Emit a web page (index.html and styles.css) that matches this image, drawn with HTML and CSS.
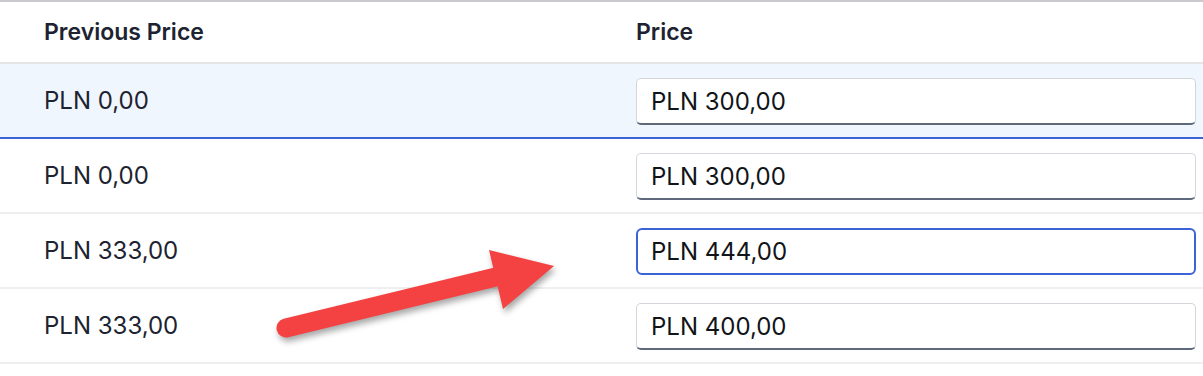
FILE: index.html
```html
<!DOCTYPE html>
<html lang="en">
<head>
    <meta charset="UTF-8">
    <title>Variant prices</title>
    <link rel="stylesheet" href="styles.css">
</head>
<body>

    <div class="prices">
        <table class="prices__table">
            <thead>
                <tr class="prices__head">
                    <th class="prices__cell prices__cell--prev">Previous Price</th>
                    <th class="prices__cell prices__cell--price">Price</th>
                </tr>
            </thead>
            <tbody>
                <tr class="prices__row prices__row--active">
                    <td class="prices__cell prices__cell--prev">PLN 0,00</td>
                    <td class="prices__cell prices__cell--price">
                        <input class="prices__input" type="text" value="PLN 300,00">
                    </td>
                </tr>
                <tr class="prices__row">
                    <td class="prices__cell prices__cell--prev">PLN 0,00</td>
                    <td class="prices__cell prices__cell--price">
                        <input class="prices__input" type="text" value="PLN 300,00">
                    </td>
                </tr>
                <tr class="prices__row">
                    <td class="prices__cell prices__cell--prev">PLN 333,00</td>
                    <td class="prices__cell prices__cell--price">
                        <input class="prices__input prices__input--focus" type="text" value="PLN 444,00">
                    </td>
                </tr>
                <tr class="prices__row">
                    <td class="prices__cell prices__cell--prev">PLN 333,00</td>
                    <td class="prices__cell prices__cell--price">
                        <input class="prices__input" type="text" value="PLN 400,00">
                    </td>
                </tr>
            </tbody>
        </table>

        <!-- annotation arrow pointing at the edited price -->
        <svg class="prices__arrow" width="300" height="110" viewBox="0 0 300 110">
            <line x1="16" y1="88" x2="234" y2="35" stroke="#f44141" stroke-width="19" stroke-linecap="round"/>
            <polygon points="219,10 284,26 233,69" fill="#f44141"/>
        </svg>
    </div>

</body>
</html>
```

FILE: styles.css
```css
html {
    background-color: #fff;
}

body {
    margin: 0;
    font-family: Inter, "Liberation Sans", sans-serif;
    color: #1d2330;
}

.prices {
    position: relative;
    border-top: 2px solid #c8cacd;
}

.prices__table {
    width: 100%;
    border-collapse: collapse;
    font-size: 24px;
}

.prices__head {
    height: 61px;
    border-bottom: 2px solid #e4e5e7;
}

.prices__head .prices__cell {
    font-size: 23px;
    font-weight: 600;
    text-align: left;
    padding-bottom: 1px;
}

.prices__row {
    height: 75px;
    border-bottom: 2px solid #eeeff1;
}

.prices__row--active {
    background-color: #eff6fe;
    border-bottom-color: #3c63d3;
}

.prices__cell {
    padding: 0;
    vertical-align: middle;
}

.prices__cell--prev {
    width: 592px;
    padding-left: 44px;
}

.prices__cell--price {
    padding-right: 7px;
}

.prices__input {
    box-sizing: border-box;
    display: block;
    width: 100%;
    height: 47px;
    margin-top: 2px;
    padding: 0 14px;
    border: 1px solid #d3d7dc;
    border-bottom: 2px solid #5e6a7b;
    border-radius: 5px;
    background: #fff;
    font: inherit;
    color: #111418;
    outline: none;
}

.prices__input--focus {
    border: 2px solid #3c63d6;
    border-radius: 6px;
    padding-left: 13px;
}

.prices__arrow {
    position: absolute;
    left: 270px;
    top: 238px;
    filter: drop-shadow(2px 4px 3px rgba(0, 0, 0, 0.35));
}
```
